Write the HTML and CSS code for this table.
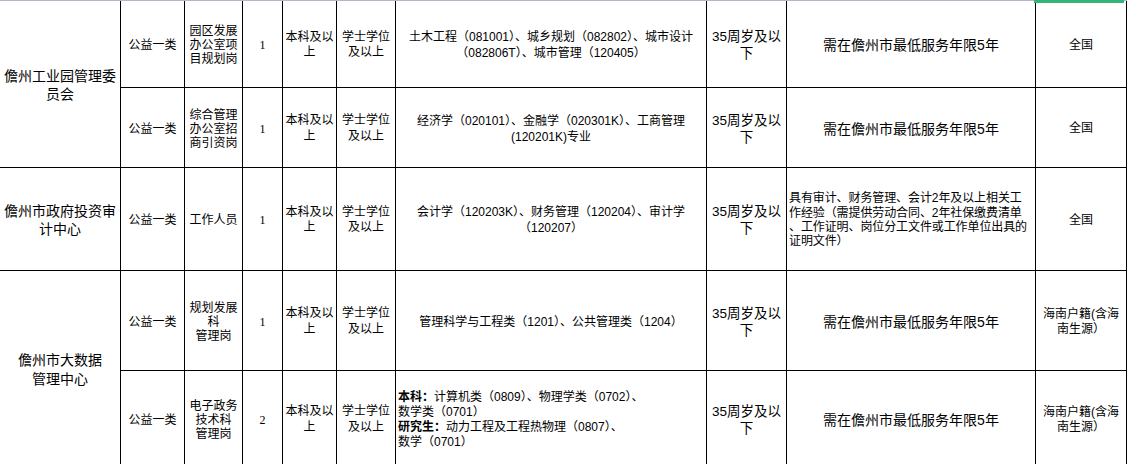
FILE: index.html
```html
<!DOCTYPE html>
<html lang="zh-CN">
<head>
<meta charset="utf-8">
<title>岗位表</title>
<link rel="stylesheet" href="styles.css">
</head>
<body>
<div class="sheet">
  <!-- row 1 -->
  <div class="cell unit span2"><span>儋州工业园管理委<br>员会</span></div>
  <div class="cell"><span>公益一类</span></div>
  <div class="cell pos"><span>园区发展<br>办公室项<br>目规划岗</span></div>
  <div class="cell num"><span>1</span></div>
  <div class="cell edu"><span>本科及以<br>上</span></div>
  <div class="cell edu"><span>学士学位<br>及以上</span></div>
  <div class="cell major"><span>土木工程（081001）、城乡规划（082802）、城市设计<br>（082806T）、城市管理（120405）</span></div>
  <div class="cell age"><span>35周岁及以<br>下</span></div>
  <div class="cell other"><span>需在儋州市最低服务年限5年</span></div>
  <div class="cell scope selected"><span>全国</span></div>
  <!-- row 2 -->
  <div class="cell"><span>公益一类</span></div>
  <div class="cell pos"><span>综合管理<br>办公室招<br>商引资岗</span></div>
  <div class="cell num"><span>1</span></div>
  <div class="cell edu"><span>本科及以<br>上</span></div>
  <div class="cell edu"><span>学士学位<br>及以上</span></div>
  <div class="cell major"><span>经济学（020101）、金融学（020301K）、工商管理<br>(120201K)专业</span></div>
  <div class="cell age"><span>35周岁及以<br>下</span></div>
  <div class="cell other"><span>需在儋州市最低服务年限5年</span></div>
  <div class="cell scope"><span>全国</span></div>
  <!-- row 3 -->
  <div class="cell unit"><span>儋州市政府投资审<br>计中心</span></div>
  <div class="cell"><span>公益一类</span></div>
  <div class="cell pos"><span>工作人员</span></div>
  <div class="cell num"><span>1</span></div>
  <div class="cell edu"><span>本科及以<br>上</span></div>
  <div class="cell edu"><span>学士学位<br>及以上</span></div>
  <div class="cell major"><span>会计学（120203K）、财务管理（120204）、审计学<br>（120207）</span></div>
  <div class="cell age"><span>35周岁及以<br>下</span></div>
  <div class="cell other left req"><span>具有审计、财务管理、会计2年及以上相关工<br>作经验（需提供劳动合同、2年社保缴费清单<br>、工作证明、岗位分工文件或工作单位出具的<br>证明文件）</span></div>
  <div class="cell scope"><span>全国</span></div>
  <!-- row 4 -->
  <div class="cell unit span2"><span>儋州市大数据<br>管理中心</span></div>
  <div class="cell"><span>公益一类</span></div>
  <div class="cell pos"><span>规划发展<br>科<br>管理岗</span></div>
  <div class="cell num"><span>1</span></div>
  <div class="cell edu"><span>本科及以<br>上</span></div>
  <div class="cell edu"><span>学士学位<br>及以上</span></div>
  <div class="cell major"><span>管理科学与工程类（1201）、公共管理类（1204）</span></div>
  <div class="cell age"><span>35周岁及以<br>下</span></div>
  <div class="cell other"><span>需在儋州市最低服务年限5年</span></div>
  <div class="cell scope"><span>海南户籍(含海<br>南生源）</span></div>
  <!-- row 5 -->
  <div class="cell"><span>公益一类</span></div>
  <div class="cell pos"><span>电子政务<br>技术科<br>管理岗</span></div>
  <div class="cell num"><span>2</span></div>
  <div class="cell edu"><span>本科及以<br>上</span></div>
  <div class="cell edu"><span>学士学位<br>及以上</span></div>
  <div class="cell major left list"><span><b>本科：</b>计算机类（0809）、物理学类（0702）、<br>数学类（0701）<br><b>研究生：</b>动力工程及工程热物理（0807）、<br>数学（0701）</span></div>
  <div class="cell age"><span>35周岁及以<br>下</span></div>
  <div class="cell other"><span>需在儋州市最低服务年限5年</span></div>
  <div class="cell scope"><span>海南户籍(含海<br>南生源）</span></div>
</div>
</body>
</html>
```

FILE: styles.css
```css
html, body {
  margin: 0;
  padding: 0;
  background: #ffffff;
  overflow: hidden;
}

body {
  font-family: "Liberation Sans", "Noto Sans CJK SC", sans-serif;
  color: #000000;
}

.sheet {
  display: grid;
  grid-template-columns: 121px 64px 58px 40px 54px 59px 311px 80px 249px 91px;
  grid-template-rows: 87px 80px 103px 100px 96px;
  border-top: 1px solid #b4b6c8;
  width: 1127px;
}

.cell {
  box-sizing: border-box;
  border-right: 1px solid #000;
  border-bottom: 1px solid #000;
  display: flex;
  align-items: center;
  justify-content: center;
  text-align: center;
  white-space: nowrap;
  font-size: 12px;
  line-height: 14px;
  padding-top: 2px;
  overflow: hidden;
}

.span2 {
  grid-row: span 2;
}

.unit {
  font-size: 14px;
  line-height: 18.5px;
}

.pos {
  line-height: 14px;
}

.num {
  font-family: "Liberation Serif", "Noto Sans CJK SC", serif;
  font-size: 12px;
}

.edu {
  line-height: 15.5px;
}

.major {
  line-height: 16px;
}

.age {
  font-size: 13.5px;
  line-height: 17px;
}

.other {
  font-size: 14px;
}

.scope {
  line-height: 15px;
}

.left {
  justify-content: flex-start;
  text-align: left;
  padding-left: 2px;
}

.req {
  font-size: 12px;
  line-height: 14.3px;
  letter-spacing: -0.1px;
}

.list {
  line-height: 15px;
}

.list b {
  font-weight: 700;
}

.selected {
  position: relative;
  overflow: visible;
}

.selected::before {
  content: "";
  position: absolute;
  top: -1px;
  left: -2px;
  right: 2px;
  height: 3px;
  background: #33b57a;
}
```
